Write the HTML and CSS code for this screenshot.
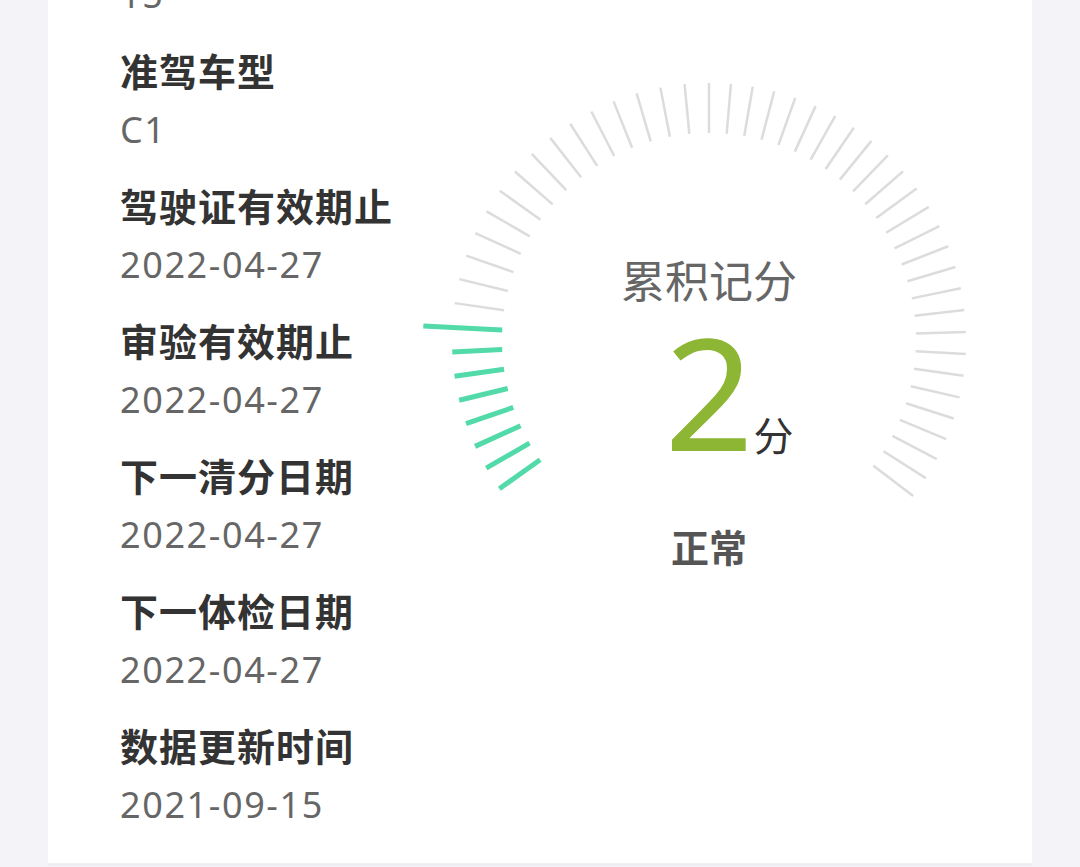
FILE: index.html
```html
<!DOCTYPE html>
<html lang="zh-CN">
<head>
  <meta charset="UTF-8">
  <meta name="viewport" content="width=device-width, initial-scale=1.0">
  <link rel="stylesheet" href="styles.css">
</head>
<body>
  <div class="card">
    <div class="info-list">
      <div class="info-value info-value-cut">15</div>
      <div class="info-item">
        <div class="info-label">准驾车型</div>
        <div class="info-value">C1</div>
      </div>
      <div class="info-item">
        <div class="info-label">驾驶证有效期止</div>
        <div class="info-value">2022-04-27</div>
      </div>
      <div class="info-item">
        <div class="info-label">审验有效期止</div>
        <div class="info-value">2022-04-27</div>
      </div>
      <div class="info-item">
        <div class="info-label">下一清分日期</div>
        <div class="info-value">2022-04-27</div>
      </div>
      <div class="info-item">
        <div class="info-label">下一体检日期</div>
        <div class="info-value">2022-04-27</div>
      </div>
      <div class="info-item">
        <div class="info-label">数据更新时间</div>
        <div class="info-value">2021-09-15</div>
      </div>
    </div>

    <div class="gauge">
      <svg class="gauge-dial" width="600" height="600" viewBox="0 0 600 600">
        <defs>
          <line id="tk" x1="43" y1="300" x2="93" y2="300"/>
        </defs>
        <!-- 已用分值 -->
        <use href="#tk" class="tick tick-on" transform="rotate(-35.35 300 300)"/>
        <use href="#tk" class="tick tick-on" transform="rotate(-29.9 300 300)"/>
        <use href="#tk" class="tick tick-on" transform="rotate(-24.45 300 300)"/>
        <use href="#tk" class="tick tick-on" transform="rotate(-19 300 300)"/>
        <use href="#tk" class="tick tick-on" transform="rotate(-13.55 300 300)"/>
        <use href="#tk" class="tick tick-on" transform="rotate(-8.1 300 300)"/>
        <use href="#tk" class="tick tick-on" transform="rotate(-2.65 300 300)"/>
        <line class="pointer" x1="14" y1="300" x2="93" y2="300" transform="rotate(2.8 300 300)"/>
        <!-- 剩余刻度 -->
        <use href="#tk" class="tick" transform="rotate(8.25 300 300)"/>
        <use href="#tk" class="tick" transform="rotate(13.7 300 300)"/>
        <use href="#tk" class="tick" transform="rotate(19.15 300 300)"/>
        <use href="#tk" class="tick" transform="rotate(24.6 300 300)"/>
        <use href="#tk" class="tick" transform="rotate(30.05 300 300)"/>
        <use href="#tk" class="tick" transform="rotate(35.5 300 300)"/>
        <use href="#tk" class="tick" transform="rotate(40.95 300 300)"/>
        <use href="#tk" class="tick" transform="rotate(46.4 300 300)"/>
        <use href="#tk" class="tick" transform="rotate(51.85 300 300)"/>
        <use href="#tk" class="tick" transform="rotate(57.3 300 300)"/>
        <use href="#tk" class="tick" transform="rotate(62.75 300 300)"/>
        <use href="#tk" class="tick" transform="rotate(68.2 300 300)"/>
        <use href="#tk" class="tick" transform="rotate(73.65 300 300)"/>
        <use href="#tk" class="tick" transform="rotate(79.1 300 300)"/>
        <use href="#tk" class="tick" transform="rotate(84.55 300 300)"/>
        <use href="#tk" class="tick" transform="rotate(90 300 300)"/>
        <use href="#tk" class="tick" transform="rotate(94.9 300 300)"/>
        <use href="#tk" class="tick" transform="rotate(99.8 300 300)"/>
        <use href="#tk" class="tick" transform="rotate(104.7 300 300)"/>
        <use href="#tk" class="tick" transform="rotate(109.6 300 300)"/>
        <use href="#tk" class="tick" transform="rotate(114.5 300 300)"/>
        <use href="#tk" class="tick" transform="rotate(119.4 300 300)"/>
        <use href="#tk" class="tick" transform="rotate(124.3 300 300)"/>
        <use href="#tk" class="tick" transform="rotate(129.2 300 300)"/>
        <use href="#tk" class="tick" transform="rotate(134.1 300 300)"/>
        <use href="#tk" class="tick" transform="rotate(139 300 300)"/>
        <use href="#tk" class="tick" transform="rotate(143.9 300 300)"/>
        <use href="#tk" class="tick" transform="rotate(148.8 300 300)"/>
        <use href="#tk" class="tick" transform="rotate(153.7 300 300)"/>
        <use href="#tk" class="tick" transform="rotate(158.6 300 300)"/>
        <use href="#tk" class="tick" transform="rotate(163.5 300 300)"/>
        <use href="#tk" class="tick" transform="rotate(168.4 300 300)"/>
        <use href="#tk" class="tick" transform="rotate(173.3 300 300)"/>
        <use href="#tk" class="tick" transform="rotate(178.2 300 300)"/>
        <use href="#tk" class="tick" transform="rotate(183.1 300 300)"/>
        <use href="#tk" class="tick" transform="rotate(188 300 300)"/>
        <use href="#tk" class="tick" transform="rotate(192.9 300 300)"/>
        <use href="#tk" class="tick" transform="rotate(197.8 300 300)"/>
        <use href="#tk" class="tick" transform="rotate(202.7 300 300)"/>
        <use href="#tk" class="tick" transform="rotate(207.6 300 300)"/>
        <use href="#tk" class="tick" transform="rotate(212.5 300 300)"/>
        <use href="#tk" class="tick" transform="rotate(217.4 300 300)"/>
      </svg>
      <div class="gauge-center">
        <div class="gauge-title">累积记分</div>
        <div class="gauge-score">
          <span class="score-num">2</span>
          <span class="score-unit">分</span>
        </div>
        <div class="gauge-status">正常</div>
      </div>
    </div>
  </div>
</body>
</html>
```

FILE: styles.css
```css
* {
  box-sizing: border-box;
}

body {
  margin: 0;
  background: #f4f4f8;
  font-family: "Noto Sans CJK SC", sans-serif;
  overflow: hidden;
}

/* 信息卡片 */
.card {
  display: flex;
  align-items: flex-start;
  margin: 0 48px;
  padding: 0 0 8px 72px;
  background: #fff;
  border-bottom: 3px solid #efeff1;
}

.info-list {
  flex: none;
  width: 289px;
}

.info-item {
  margin-bottom: 25px;
}

.info-label {
  height: 50px;
  margin-bottom: 10px;
  font-size: 38px;
  line-height: 50px;
  font-weight: 700;
  letter-spacing: 1px;
  color: #333;
  white-space: nowrap;
}

.info-value {
  height: 50px;
  font-family: "Noto Sans", "Noto Sans CJK SC", sans-serif;
  font-size: 36px;
  line-height: 50px;
  letter-spacing: 1.6px;
  color: #666;
}

.info-value-cut {
  margin-top: -30px;
  margin-bottom: 25px;
}

/* 记分仪表 */
.gauge {
  position: relative;
  flex: none;
  width: 600px;
  height: 600px;
  margin-top: 40px;
}

.gauge-dial {
  display: block;
}

.tick {
  stroke: #dcdcdc;
  stroke-width: 2.5;
}

.tick-on {
  stroke: #52daa9;
  stroke-width: 5;
}

.pointer {
  stroke: #52daa9;
  stroke-width: 5;
}

.gauge-center {
  position: absolute;
  top: 0;
  left: 0;
  right: 0;
  display: flex;
  flex-direction: column;
  align-items: center;
  padding-top: 214px;
}

.gauge-title {
  font-size: 44px;
  line-height: 50px;
  color: #666;
}

.gauge-score {
  display: flex;
  align-items: baseline;
  height: 156px;
  margin-top: 9px;
  padding-left: 40px;
  line-height: 1;
}

.score-num {
  font-family: "Noto Sans", sans-serif;
  font-size: 156px;
  color: #8cb634;
}

.score-unit {
  font-size: 40px;
  color: #333;
}

.gauge-status {
  margin-top: 52px;
  font-size: 38px;
  line-height: 50px;
  font-weight: 700;
  color: #555;
}
```
